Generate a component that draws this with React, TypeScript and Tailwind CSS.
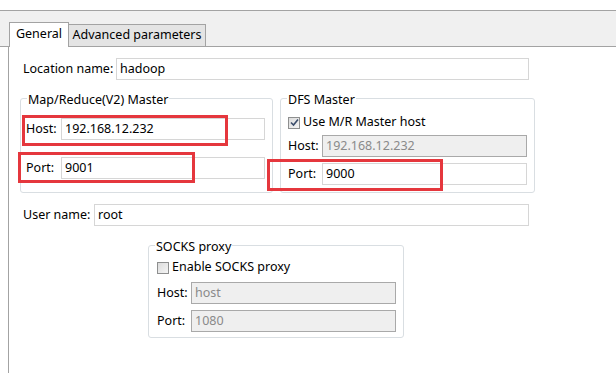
import React from 'react';

const Field = ({ value, disabled, w }: { value: string; disabled?: boolean; w: string }) => (
  <div
    className={`${w} h-[22px] flex items-center px-[3px] border ${
      disabled ? 'bg-[#efefef] border-[#a9a9a9] text-[#8a8a8a]' : 'bg-white border-[#d6d6d6] text-black'
    }`}
  >
    {value}
  </div>
);

const Check = ({ checked }: { checked?: boolean }) => (
  <span className="w-[12px] h-[12px] border border-[#8e8f8f] bg-gradient-to-br from-[#dcdcdc] to-[#f4f4f4] flex items-center justify-center">
    {checked && (
      <svg width="9" height="9" viewBox="0 0 9 9">
        <path d="M1 4.5 L3.5 7 L8 1.5" fill="none" stroke="#3b4d6b" strokeWidth="1.6" />
      </svg>
    )}
  </span>
);

const Group = ({ title, className, children }: { title: string; className: string; children: React.ReactNode }) => (
  <div className={`relative border border-[#d9dee2] rounded-[3px] ${className}`}>
    <span className="absolute -top-[7px] left-[6px] bg-white px-[1px] leading-[16px]">{title}</span>
    {children}
  </div>
);

const Red = ({ className }: { className: string }) => (
  <div className={`absolute border-[3px] border-[#e5373d] ${className}`} />
);

export default function App() {
  return (
    <div
      className="relative w-[616px] h-[373px] bg-white overflow-hidden text-[12.5px] text-black flex flex-col"
      style={{ fontFamily: '"Noto Sans", "Open Sans", sans-serif' }}
    >
      <div className="h-[11px] border-b border-[#a3a3a3] shrink-0" />

      {/* tab bar */}
      <div className="h-[36px] bg-[#f0f0f0] border-b border-[#a3a3a3] flex items-end pl-[9px] shrink-0">
        <div className="h-[25px] w-[60px] -mb-px bg-white border border-b-0 border-[#a3a3a3] flex items-center justify-center pb-[2px]">
          General
        </div>
        <div className="h-[22px] w-[137px] bg-[#e4e4e4] border border-l-0 border-b-0 border-[#a3a3a3] flex items-center justify-center">
          Advanced parameters
        </div>
      </div>

      {/* content */}
      <div className="flex-1 ml-[8px] border-l border-[#a3a3a3] pl-[11px] flex flex-col">
        <div className="flex items-center mt-[11px] pl-[3px]">
          <span className="w-[93px]">Location name:</span>
          <Field value="hadoop" w="w-[413px]" />
        </div>

        <div className="flex gap-[7px] mt-[18px]">
          <Group title="Map/Reduce(V2) Master" className="w-[253px] h-[95px] pl-[5px] pt-[19px]">
            <div className="flex items-center">
              <span className="w-[35px]">Host:</span>
              <Field value="192.168.12.232" w="w-[204px]" />
            </div>
            <div className="flex items-center mt-[17px]">
              <span className="w-[35px]">Port:</span>
              <Field value="9001" w="w-[204px]" />
            </div>
          </Group>
          <Group title="DFS Master" className="w-[255px] h-[95px] pl-[7px] pt-[15px]">
            <div className="flex items-center gap-[3px] h-[17px]">
              <Check checked />
              <span>Use M/R Master host</span>
            </div>
            <div className="flex items-center mt-[4px]">
              <span className="w-[34px]">Host:</span>
              <Field value="192.168.12.232" disabled w="w-[205px]" />
            </div>
            <div className="flex items-center mt-[6px]">
              <span className="w-[34px]">Port:</span>
              <Field value="9000" w="w-[205px]" />
            </div>
          </Group>
        </div>

        <div className="flex items-center mt-[11px] pl-[3px]">
          <span className="w-[71px]">User name:</span>
          <Field value="root" w="w-[435px]" />
        </div>

        <div className="pl-[128px] mt-[19px]">
          <Group title="SOCKS proxy" className="w-[256px] h-[93px] pl-[8px] pt-[13px]">
            <div className="flex items-center gap-[3px] h-[17px]">
              <Check />
              <span>Enable SOCKS proxy</span>
            </div>
            <div className="flex items-center mt-[6px]">
              <span className="w-[34px]">Host:</span>
              <Field value="host" disabled w="w-[205px]" />
            </div>
            <div className="flex items-center mt-[6px]">
              <span className="w-[34px]">Port:</span>
              <Field value="1080" disabled w="w-[205px]" />
            </div>
          </Group>
        </div>
      </div>

      {/* red annotation boxes */}
      <Red className="left-[22px] top-[115px] w-[206px] h-[31px]" />
      <Red className="left-[18px] top-[152px] w-[177px] h-[31px]" />
      <Red className="left-[267px] top-[159px] w-[176px] h-[32px]" />
    </div>
  );
}
